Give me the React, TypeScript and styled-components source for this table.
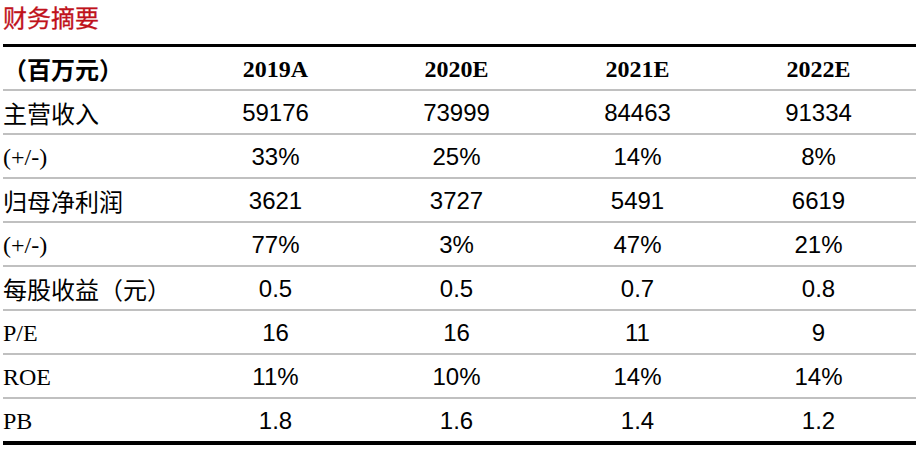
import React from "react";
import styled, { createGlobalStyle } from "styled-components";

const GlobalStyle = createGlobalStyle`
  html, body {
    margin: 0;
    padding: 0;
    background: #fff;
  }
`;

const Page = styled.div`
  padding-left: 3px;
  width: 913px;
  overflow: hidden;
`;

const Title = styled.div`
  height: 44px;
  line-height: 34px;
  font-family: "Noto Sans CJK SC", sans-serif;
  font-size: 24px;
  color: #c0121b;
  -webkit-text-stroke: 0.3px #c0121b;
`;

const Table = styled.div`
  border-top: 3px solid #000;
  border-bottom: 4px solid #000;
`;

const Row = styled.div<{ $last?: boolean }>`
  display: grid;
  grid-template-columns: 182px repeat(4, 181px) 1fr;
  height: 42px;
  align-items: center;
  border-bottom: ${(p) => (p.$last ? "none" : "2px solid #c0c0c0")};
`;

const Label = styled.div<{ $kind: "cjk" | "latin" | "head" }>`
  font-size: 24px;
  color: #000;
  white-space: nowrap;
  font-family: ${(p) =>
    p.$kind === "latin"
      ? '"Liberation Serif", serif'
      : '"Noto Sans CJK SC", sans-serif'};
  font-weight: ${(p) => (p.$kind === "head" ? 700 : 400)};
  margin-top: ${(p) => (p.$kind === "latin" ? "2px" : "0")};
`;

const HeadCell = styled.div`
  text-align: center;
  font-family: "Liberation Serif", serif;
  font-weight: 700;
  font-size: 24px;
  color: #000;
  margin-top: 2px;
`;

const Cell = styled.div`
  text-align: center;
  font-family: "Liberation Sans", Arial, sans-serif;
  font-size: 24px;
  color: #000;
  margin-top: 2px;
`;

type Line = { label: string; kind: "cjk" | "latin"; values: string[] };

const years = ["2019A", "2020E", "2021E", "2022E"];

const lines: Line[] = [
  { label: "主营收入", kind: "cjk", values: ["59176", "73999", "84463", "91334"] },
  { label: "(+/-)", kind: "latin", values: ["33%", "25%", "14%", "8%"] },
  { label: "归母净利润", kind: "cjk", values: ["3621", "3727", "5491", "6619"] },
  { label: "(+/-)", kind: "latin", values: ["77%", "3%", "47%", "21%"] },
  { label: "每股收益（元）", kind: "cjk", values: ["0.5", "0.5", "0.7", "0.8"] },
  { label: "P/E", kind: "latin", values: ["16", "16", "11", "9"] },
  { label: "ROE", kind: "latin", values: ["11%", "10%", "14%", "14%"] },
  { label: "PB", kind: "latin", values: ["1.8", "1.6", "1.4", "1.2"] },
];

function App() {
  return (
    <>
      <GlobalStyle />
      <Page>
        <Title>财务摘要</Title>
        <Table>
          <Row>
            <Label $kind="head">（百万元）</Label>
            {years.map((y) => (
              <HeadCell key={y}>{y}</HeadCell>
            ))}
          </Row>
          {lines.map((line, i) => (
            <Row key={i} $last={i === lines.length - 1}>
              <Label $kind={line.kind}>{line.label}</Label>
              {line.values.map((v, j) => (
                <Cell key={j}>{v}</Cell>
              ))}
            </Row>
          ))}
        </Table>
      </Page>
    </>
  );
}

export default App;
